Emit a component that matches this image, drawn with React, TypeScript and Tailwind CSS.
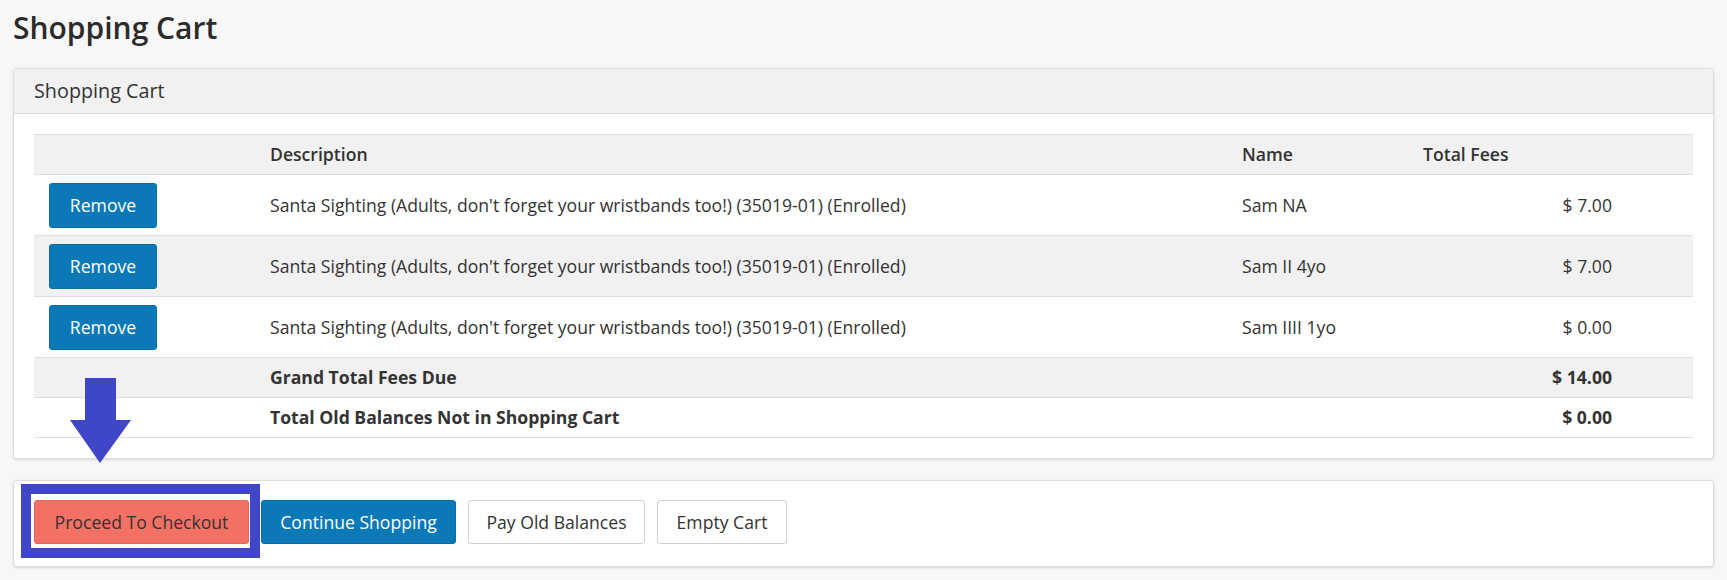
const rows = [
  { desc: "Santa Sighting (Adults, don't forget your wristbands too!) (35019-01) (Enrolled)", name: "Sam NA", fee: "$ 7.00" },
  { desc: "Santa Sighting (Adults, don't forget your wristbands too!) (35019-01) (Enrolled)", name: "Sam II 4yo", fee: "$ 7.00" },
  { desc: "Santa Sighting (Adults, don't forget your wristbands too!) (35019-01) (Enrolled)", name: "Sam IIII 1yo", fee: "$ 0.00" },
];

export default function App() {
  return (
    <div
      className="min-h-[580px] bg-[#f7f7f7] px-[13px] pb-4 text-[17.6px] text-[#333]"
      style={{ fontFamily: '"Open Sans", "Liberation Sans", sans-serif' }}
    >
      <h1 className="pt-[9px] text-[30px] font-semibold leading-[38px] text-[#2b2b2b]">Shopping Cart</h1>

      <div className="relative mt-[21px] rounded-[4px] border border-[#dcdcdc] bg-white shadow-[0_1px_3px_rgba(0,0,0,0.12)]">
        <div className="flex h-[45px] items-center rounded-t-[4px] border-b border-[#dcdcdc] bg-[#f1f1f1] px-[20px] text-[19.8px]">
          Shopping Cart
        </div>
        <div className="px-[20px] pb-[20px] pt-[20px]">
          <table className="w-full table-fixed border-collapse">
            <colgroup>
              <col className="w-[224px]" />
              <col className="w-[972px]" />
              <col className="w-[181px]" />
              <col className="w-[213px]" />
              <col />
            </colgroup>
            <thead>
              <tr className="h-[40px] border-y border-[#dedede] bg-[#f1f1f1] text-left">
                <th className="px-[12px]"></th>
                <th className="px-[12px] font-semibold">Description</th>
                <th className="px-[12px] font-semibold">Name</th>
                <th className="px-[12px] font-semibold">Total Fees</th>
                <th></th>
              </tr>
            </thead>
            <tbody>
              {rows.map((r, i) => (
                <tr key={i} className={`border-b border-[#dedede] ${i === 1 ? "bg-[#f1f1f1]" : "bg-white"}`}>
                  <td className="pb-[7px] pl-[15px] pt-[8px]">
                    <button className="block h-[45px] w-[108px] rounded-[3px] border border-[#0a6da5] bg-[#0b79b7] text-white">
                      Remove
                    </button>
                  </td>
                  <td className="px-[12px] whitespace-nowrap">{r.desc}</td>
                  <td className="px-[12px]">{r.name}</td>
                  <td className="px-[12px] text-right">{r.fee}</td>
                  <td></td>
                </tr>
              ))}
              <tr className="h-[40px] border-b border-[#dedede] bg-[#f1f1f1] font-bold">
                <td></td>
                <td className="px-[12px]">Grand Total Fees Due</td>
                <td></td>
                <td className="px-[12px] text-right">$ 14.00</td>
                <td></td>
              </tr>
              <tr className="h-[40px] border-b border-[#dedede] font-bold">
                <td></td>
                <td className="px-[12px]">Total Old Balances Not in Shopping Cart</td>
                <td></td>
                <td className="px-[12px] text-right">$ 0.00</td>
                <td></td>
              </tr>
            </tbody>
          </table>
        </div>

        {/* annotation arrow */}
        <svg className="absolute left-[56px] top-[309px]" width="62" height="86" viewBox="0 0 62 86">
          <path d="M15 0 H46 V42 H61 L30 85 L0 42 H15 Z" fill="#4046c8" />
        </svg>
      </div>

      <div className="mt-[21px] rounded-[4px] border border-[#dcdcdc] bg-white px-[20px] pb-[22px] pt-[19px] shadow-[0_1px_3px_rgba(0,0,0,0.12)]">
        <div className="flex gap-[12px]">
          <div className="relative">
            <div className="absolute -bottom-[14px] -left-[13px] -right-[11px] -top-[16px] border-[10px] border-[#4046c8]"></div>
            <button className="relative h-[44px] w-[215px] rounded-[3px] border border-[#e0655a] bg-[#f37064] text-[#333]">
              Proceed To Checkout
            </button>
          </div>
          <button className="relative z-10 h-[44px] w-[195px] rounded-[3px] border border-[#0a6da5] bg-[#0b79b7] text-white">
            Continue Shopping
          </button>
          <button className="h-[44px] w-[177px] rounded-[3px] border border-[#cfcfcf] bg-white">
            Pay Old Balances
          </button>
          <button className="h-[44px] w-[130px] rounded-[3px] border border-[#cfcfcf] bg-white">
            Empty Cart
          </button>
        </div>
      </div>
    </div>
  );
}
